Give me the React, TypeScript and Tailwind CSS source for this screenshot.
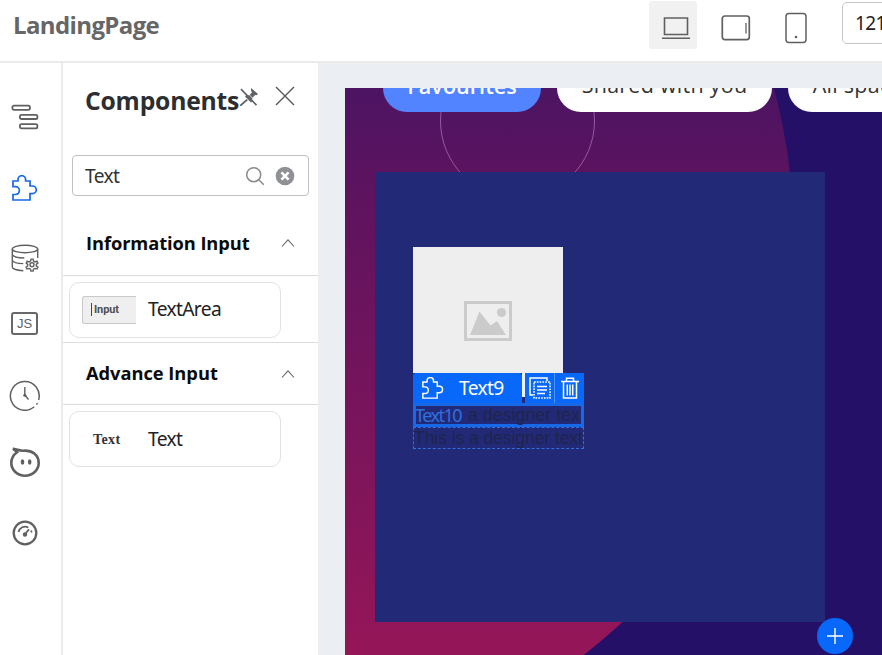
import React from 'react';

const Puzzle = ({ className }: { className: string }) => (
  <svg viewBox="0 0 26 26" className={className} fill="none" stroke="currentColor" strokeWidth="1.7">
    <path d="M1 6H6V4.5a3.8 3.8 0 0 1 7.6 0V6H18v5h2.5a3.8 3.8 0 0 1 0 7.6H18V25H1v-5.5h2.5a3.8 3.8 0 0 0 0-7.8H1Z" />
  </svg>
);

const Chevron = () => (
  <svg viewBox="0 0 14 10" className="h-[10px] w-[14px]" fill="none" stroke="#666" strokeWidth="1.1">
    <path d="M1 8.5 7 1.8 13 8.5" />
  </svg>
);

const rail = 'shrink-0 text-[#606060]';

const Rail = () => (
  <nav className="flex w-[63px] shrink-0 flex-col items-center border-r-2 border-[#ebebeb] bg-white pr-[12px] pt-[41px]">
    <svg viewBox="0 0 28 28" className={`${rail} h-[28px] w-[28px]`} fill="none" stroke="currentColor" strokeWidth="1.8">
      <rect x="1.4" y="1.6" width="17.5" height="4.2" rx="1.6" />
      <rect x="8.9" y="10.8" width="17.5" height="4.2" rx="1.6" />
      <rect x="8.9" y="20.1" width="17.5" height="4.2" rx="1.6" />
    </svg>
    <Puzzle className="mt-[43px] h-[26px] w-[26px] shrink-0 text-[#1769e8]" />
    <svg viewBox="0 0 28 28" className={`${rail} mt-[43px] h-[28px] w-[28px]`} fill="none" stroke="currentColor" strokeWidth="1.4">
      <ellipse cx="14" cy="5" rx="12.7" ry="3.8" />
      <path d="M1.3 5v18c0 2 5 3.5 11 3.7M26.7 5v9M1.3 10.5c1 2.5 6 3.5 12 3.5M1.3 16.2c1 2.5 5 3.3 11 3.4" />
      <circle cx="21" cy="20.8" r="2" />
      <path d="m20 15.1-.4 2-1.6.8-1.8-.7-1 1.8 1.5 1.4v1.5L15 23.2l1 1.8 2-.6 1.5.8.5 1.9h2l.5-1.9 1.5-.8 2 .6 1-1.8-1.7-1.3v-1.5l1.6-1.4-1-1.8-1.9.7-1.5-.8-.4-2Z" />
    </svg>
    <div className="mt-[40px] flex h-[23px] w-[27px] shrink-0 items-center justify-center rounded-[3px] border-2 border-[#686868] font-['Liberation_Sans'] text-[13px] leading-none text-[#606060]">JS</div>
    <svg viewBox="0 0 32 32" className={`${rail} mt-[44px] h-[32px] w-[32px]`} fill="none" stroke="currentColor">
      <path d="M25.2 27.8A14.4 14.4 0 1 1 29.6 21" strokeWidth="1.5" />
      <path d="M27.5 25.7 28.5 24M15.8 8v8l3.7 4.5" strokeWidth="1.4" />
      <circle cx="15.8" cy="16.2" r="1.5" fill="currentColor" stroke="none" />
    </svg>
    <svg viewBox="0 0 32 32" className={`${rail} mt-[35px] h-[32px] w-[32px]`} fill="none" stroke="currentColor" strokeWidth="2.6">
      <path d="M8 6.2C5 8.3 2.3 12 2.3 17a13.7 12.7 0 0 0 27.4 0C29.7 9 23 4 14.5 4.7 10 5 7 3 3.8 2.7 6 3.5 6.5 5 8 6.2Z" />
      <ellipse cx="13.5" cy="16" rx="1.8" ry="2.7" fill="currentColor" stroke="none" />
      <ellipse cx="20.7" cy="16" rx="1.8" ry="2.7" fill="currentColor" stroke="none" />
    </svg>
    <svg viewBox="0 0 28 28" className={`${rail} mt-[41px] h-[28px] w-[28px]`} fill="none" stroke="currentColor" strokeWidth="2.3">
      <circle cx="14" cy="14" r="11.3" />
      <path d="M7.5 13a6.8 6.8 0 0 1 9.8-4.5M20 11.5l.8 2" strokeWidth="1.7" />
      <path d="m14 15 4-4.7" strokeWidth="1.8" />
      <circle cx="14" cy="15.5" r="2.2" fill="currentColor" stroke="none" />
    </svg>
  </nav>
);

const itemLabel = "text-[19.2px] tracking-[-0.65px] font-['Noto_Sans']";

const Panel = () => (
  <aside className="w-[255px] shrink-0 bg-white">
    <div className="flex h-[92px] items-start pl-[22px] pt-[21px]">
      <h2 className="w-[154px] whitespace-nowrap text-[24.7px] font-bold leading-[34px] tracking-[-0.2px] text-[#2c2e30]">Components</h2>
      <svg viewBox="0 0 20 20" className="mt-[3px] h-[20px] w-[20px] shrink-0" fill="#606468">
        <path d="m12 1 7 6-1.5 1.3-1.3-.4-3 3.2.2 3.2-1.4 1.2L6 9.6l1.3-1.4 3 .1 2.7-3.1-1-1.4ZM7.5 12l1.4 1.3L2.3 19H1v-1.2Z" />
        <path d="m4.4 1.4 15 16" stroke="white" strokeWidth="0.7" />
        <path d="m2 2.2 15.5 16" stroke="#606468" strokeWidth="1.7" />
      </svg>
      <svg viewBox="0 0 20 20" className="ml-[16px] mt-[2px] h-[20px] w-[20px] shrink-0" stroke="#55585c" strokeWidth="1.4">
        <path d="m1 1 18 18M19 1 1 19" />
      </svg>
    </div>
    <div className="ml-[9px] flex h-[41px] w-[237px] items-center rounded-[4px] border border-[#bfc0c2] pl-[12px]">
      <span className={`${itemLabel} w-[160px] pt-px text-[#333]`}>Text</span>
      <svg viewBox="0 0 20 20" className="h-[20px] w-[20px] shrink-0" fill="none" stroke="#8b8b8b" strokeWidth="1.5">
        <circle cx="8.7" cy="8.7" r="7" />
        <path d="m13.8 13.8 5 5" />
      </svg>
      <svg viewBox="0 0 20 20" className="ml-[10px] h-[20px] w-[20px] shrink-0">
        <circle cx="10" cy="10" r="9.3" fill="#8f9194" />
        <path d="m6.4 6.4 7.2 7.2m0-7.2-7.2 7.2" stroke="white" strokeWidth="2.6" />
      </svg>
    </div>
    <div className="flex h-[80px] items-center justify-between border-b border-[#dcdcdc] pl-[23px] pr-[23px] pt-[15px]">
      <h3 className="whitespace-nowrap text-[18.3px] font-bold tracking-[-0.08px] text-[#0b0b0b]">Information Input</h3>
      <Chevron />
    </div>
    <div className="flex h-[67px] items-center border-b border-[#dcdcdc] pl-[6px] pt-px">
      <div className="flex h-[56px] w-[212px] items-center rounded-[10px] border border-[#e2e2e2] pl-[12px]">
        <div className="flex h-[28px] w-[54px] items-center rounded-l-[3px] border border-r-0 border-[#c9c9c9] bg-[#efefef] pl-[8px]">
          <span className="h-[13px] w-px bg-[#444]" />
          <span className="ml-[2px] pt-[2px] font-[Roboto] text-[11px] font-bold tracking-[-0.1px] text-[#505050]">Input</span>
        </div>
        <span className={`${itemLabel} ml-[12px] text-[#222]`}>TextArea</span>
      </div>
    </div>
    <div className="flex h-[62px] items-center justify-between border-b border-[#dcdcdc] pl-[23px] pr-[23px]">
      <h3 className="-mt-px whitespace-nowrap text-[18.3px] font-bold tracking-[-0.03px] text-[#0b0b0b]">Advance Input</h3>
      <Chevron />
    </div>
    <div className="pl-[6px] pt-[6px]">
      <div className="flex h-[56px] w-[212px] items-center rounded-[10px] border border-[#e2e2e2] pl-[23px]">
        <span className="w-[55px] font-['Liberation_Serif'] text-[14px] font-bold tracking-[0.4px] text-[#333]">Text</span>
        <span className={`${itemLabel} text-[#222]`}>Text</span>
      </div>
    </div>
  </aside>
);

const pill = "-mt-[24px] flex h-[48px] shrink-0 items-center justify-center whitespace-nowrap rounded-full text-[21.5px] font-['Open_Sans']";

const Stage = () => (
  <section className="relative ml-[27px] mt-[25px] flex-1 overflow-hidden bg-[#241066]">
    <svg className="absolute left-0 top-0 h-[567px] w-[537px]" viewBox="345 88 537 567">
      <defs>
        <linearGradient id="plum" x1="0" y1="88" x2="0" y2="655" gradientUnits="userSpaceOnUse">
          <stop offset="0" stopColor="#4c1463" />
          <stop offset="0.16" stopColor="#5c135f" />
          <stop offset="1" stopColor="#951658" />
        </linearGradient>
      </defs>
      <circle cx="257" cy="230" r="536" fill="url(#plum)" />
      <circle cx="517.5" cy="121" r="77" fill="none" stroke="#a56bb0" strokeWidth="0.8" />
    </svg>
    <div className="relative flex h-[84px] items-start gap-[16px] pl-[38px]">
      <div className={`${pill} w-[158px] bg-[#5384ff] pb-[4px] font-semibold tracking-[0.05px] text-white`}>Favourites</div>
      <div className={`${pill} w-[215px] bg-white pb-[5px] tracking-[0.25px] text-[#333]`}>Shared with you</div>
      <div className={`${pill} w-[150px] bg-white pb-[5px] tracking-[0.25px] text-[#333]`}>All spaces</div>
    </div>
    <div className="relative ml-[30px] h-[450px] w-[450px] bg-[#222a78] pl-[38px] pt-[75px]">
      <div className="flex h-[126px] w-[150px] items-start justify-center bg-[#eee] pt-[54px]">
        <svg viewBox="0 0 48 40" className="h-[40px] w-[48px]" fill="#cbcbcb">
          <path d="M0 0H48V40H0ZM3 3V37H45V3Z" fillRule="evenodd" />
          <circle cx="37.5" cy="11.5" r="4.6" />
          <path d="M6 34 15.5 10.5 26.5 24.5 33 20 42 34Z" />
        </svg>
      </div>
      <div className="flex h-[30px] w-[171px] text-white">
        <div className="flex w-[109px] items-center rounded-t-[3px] bg-[#0768fa] pl-[9px]">
          <Puzzle className="h-[22px] w-[22px]" />
          <span className={`${itemLabel} ml-[15px]`}>Text9</span>
        </div>
        <div className="h-[24px] w-[3px] bg-[#eee]" />
        <div className="flex w-[30px] items-center justify-center border-r border-[#4e91ff] bg-[#0768fa]">
          <svg viewBox="0 0 22 22" className="h-[22px] w-[22px]" fill="none" stroke="white" strokeWidth="1.5">
            <path d="M4 18H1V1H18v3" />
            <rect x="5" y="5" width="16" height="16" strokeDasharray="1.7 1.1" />
            <path d="M8 9.5h10M8 13h10M8 16.5h8" strokeWidth="1.3" />
          </svg>
        </div>
        <div className="flex w-[29px] items-center justify-center bg-[#0768fa]">
          <svg viewBox="0 0 20 22" className="h-[22px] w-[20px]" fill="none" stroke="white" strokeWidth="1.5">
            <path d="M1 4.5H19M6.5 4V1.2h7V4M3.5 4.5V21h13V4.5M7.3 7.5v11M10 7.5v11M12.7 7.5v11" />
          </svg>
        </div>
      </div>
      <div className="flex h-[24px] w-[171px] items-center whitespace-nowrap border-[3px] border-[#1769e8] font-['Liberation_Sans'] text-[17.6px]">
        <span className="-ml-px w-[53px] shrink-0 font-['Noto_Sans'] text-[18px] tracking-[-1.5px] text-[#2f70df]">Text10</span>
        <span className="shrink-0 tracking-[0.1px] text-[#20244c]">a designer tex</span>
      </div>
      <div className="flex h-[22px] w-[171px] items-center whitespace-nowrap border border-dashed border-[#326edc] font-['Liberation_Sans'] text-[17.6px] tracking-[-0.1px] text-[#20244c]">This is a designer text</div>
    </div>
    <div className="absolute left-[472px] top-[530px] flex h-[36px] w-[36px] items-center justify-center rounded-full bg-[#0768fa]">
      <svg viewBox="0 0 16 16" className="h-[16px] w-[16px]" stroke="white" strokeWidth="1.4"><path d="M8 0v16M0 8h16" /></svg>
    </div>
  </section>
);

export default function App() {
  return (
    <div className="flex h-[655px] w-[882px] flex-col overflow-hidden bg-[#ebeef2] font-['Open_Sans',sans-serif]">
      <header className="flex h-[61px] shrink-0 bg-white pl-[13px]">
        <h1 className="w-[636px] shrink-0 pt-[8px] text-[24px] font-bold leading-[34px] tracking-[-0.62px] text-[#666]">LandingPage</h1>
        <div className="mt-px flex h-[48px] w-[48px] shrink-0 items-center justify-center rounded-[3px] bg-[#f1f1f1]">
          <svg viewBox="0 0 30 24" className="ml-[6px] mt-[6px] h-[24px] w-[30px]" fill="none" stroke="#606060" strokeWidth="1.6">
            <path d="M3.5 2H26.5V18.5H3.5ZM1 22.2H29" />
          </svg>
        </div>
        <svg viewBox="0 0 30 26" className="ml-[24px] mt-[15px] h-[26px] w-[30px] shrink-0" fill="none" stroke="#606060" strokeWidth="1.7">
          <rect x="1.3" y="1" width="27" height="23.6" rx="2.5" />
          <path d="M25 8v10.5" strokeWidth="1.3" />
        </svg>
        <svg viewBox="0 0 22 32" className="ml-[34px] mt-[12px] h-[32px] w-[22px] shrink-0" fill="none" stroke="#606060" strokeWidth="1.5">
          <rect x="1" y="1.6" width="20" height="28.8" rx="3" />
          <circle cx="11" cy="25" r="1.3" fill="#606060" stroke="none" />
        </svg>
        <div className="ml-[35px] mt-[2px] h-[42px] w-[90px] shrink-0 rounded-[5px] border border-[#c5c5c5] pl-[12px] pt-[6px] font-['Noto_Sans'] text-[19px] leading-[28px] tracking-[-0.6px] text-[#222]">1216</div>
      </header>
      <div className="flex min-h-0 flex-1 border-t-2 border-[#ebebeb]">
        <Rail />
        <Panel />
        <Stage />
      </div>
    </div>
  );
}
